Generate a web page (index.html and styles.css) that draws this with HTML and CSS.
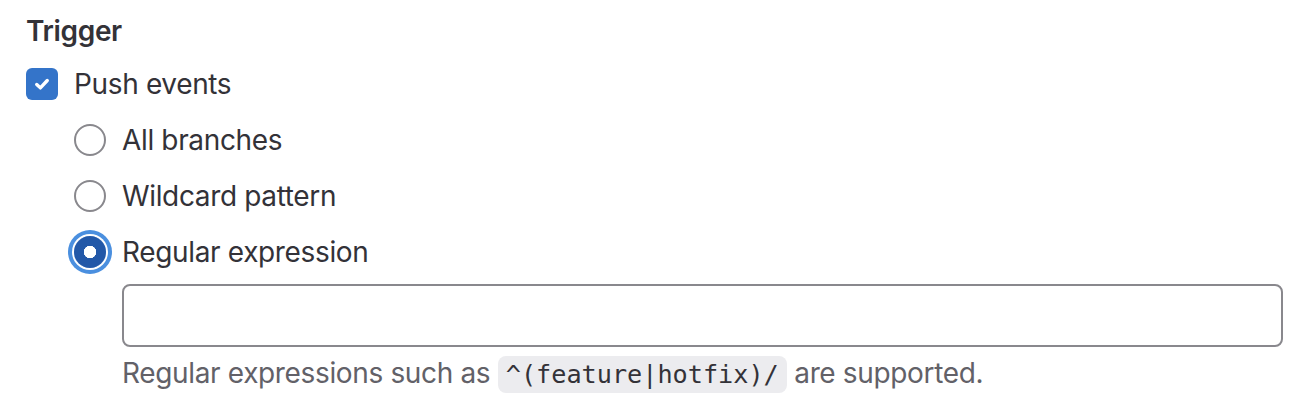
FILE: index.html
```html
<!DOCTYPE html>
<html lang="en">
<head>
<meta charset="utf-8">
<title>Trigger</title>
<link rel="stylesheet" href="styles.css">
</head>
<body>
<div class="page">
  <div class="group-label">Trigger</div>
  <div class="check-row">
    <span class="checkbox">
      <svg width="16" height="16" viewBox="0 0 16 16"><path d="M3.8 8.4 L6.7 11.1 L12.2 5.2" fill="none" stroke="#fff" stroke-width="2.7" stroke-linecap="round" stroke-linejoin="round"/></svg>
    </span>
    <span class="label">Push events</span>
  </div>
  <div class="options">
    <div class="radio-row">
      <span class="radio"></span>
      <span class="label">All branches</span>
    </div>
    <div class="radio-row">
      <span class="radio"></span>
      <span class="label">Wildcard pattern</span>
    </div>
    <div class="radio-row radio-row-last">
      <span class="radio radio-checked"></span>
      <span class="label">Regular expression</span>
    </div>
    <div class="field">
      <div class="text-input"></div>
      <p class="help">Regular expressions such as <code class="code">^(feature|hotfix)/</code> are supported.</p>
    </div>
  </div>
</div>
</body>
</html>
```
FILE: styles.css
```css
html, body {
  margin: 0;
  padding: 0;
  background: #ffffff;
}

body {
  font-family: Inter, "Noto Sans", "Liberation Sans", sans-serif;
  font-size: 28px;
  line-height: 40px;
  letter-spacing: -0.35px;
  color: #333238;
}

.page {
  padding: 11px 25px 0 26px;
}

.group-label {
  font-weight: 600;
  height: 40px;
  margin-bottom: 13px;
}

.check-row,
.radio-row {
  display: flex;
  align-items: center;
  height: 40px;
  gap: 16px;
  margin-bottom: 16px;
}

.radio-row-last {
  margin-bottom: 12px;
}

.checkbox {
  width: 32px;
  height: 32px;
  border-radius: 6px;
  background: #3474c9;
  display: flex;
  align-items: center;
  justify-content: center;
  flex: none;
}

.checkbox svg {
  width: 20px;
  height: 20px;
}

.options {
  padding-left: 48px;
}

.radio {
  width: 32px;
  height: 32px;
  box-sizing: border-box;
  border-radius: 50%;
  border: 2px solid #89888d;
  background: #fff;
  flex: none;
}

.radio-checked {
  border: none;
  background: radial-gradient(circle, #ffffff 0 6px, #2258a8 6.5px);
  box-shadow: 0 0 0 2px #ffffff, 0 0 0 6px #4a8fdf;
}

.field {
  padding-left: 48px;
}

.text-input {
  height: 63px;
  box-sizing: border-box;
  border: 2px solid #89888d;
  border-radius: 8px;
  background: #fff;
}

.help {
  margin: 6px 0 0;
  color: #626168;
}

.code {
  font-family: "DejaVu Sans Mono", "Liberation Mono", monospace;
  font-size: 25.2px;
  letter-spacing: 0;
  background: #ececef;
  color: #333238;
  border-radius: 8px;
  padding: 4px 8px;
}
```
